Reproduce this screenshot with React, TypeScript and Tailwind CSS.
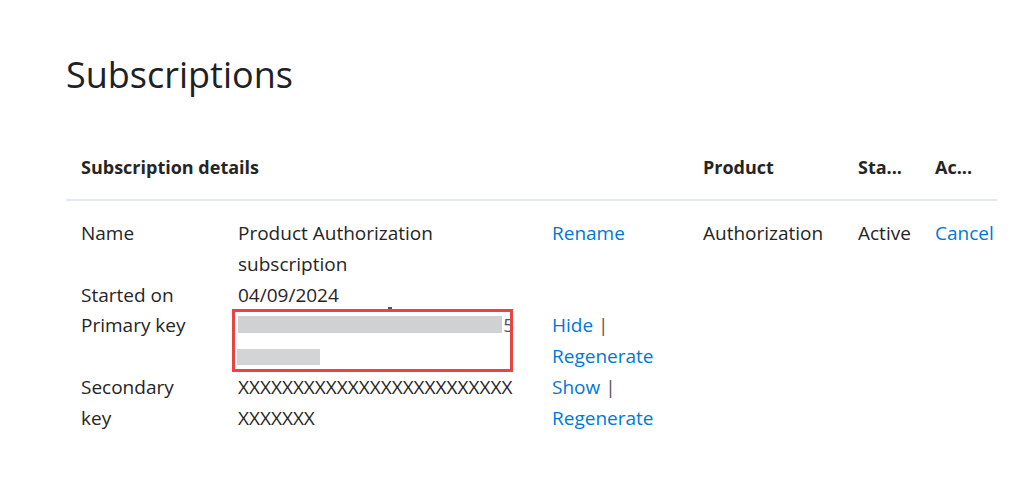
import React from "react";

const font = { fontFamily: '"Open Sans", "Noto Sans", sans-serif' };

function Link({ children }: { children: React.ReactNode }) {
  return <span className="text-[#0078d4]">{children}</span>;
}

export default function App() {
  return (
    <div className="min-h-[496px] w-[1031px] bg-white pl-[66px] pt-[51px] text-[#252525]" style={font}>
      <h1 className="text-[36px] leading-[48px] font-normal text-[#202124]">Subscriptions</h1>
      <div className="mt-[53px] w-[931px]">
        {/* header */}
        <div className="flex border-b-2 border-[#e3e9eb] pb-[17px] text-[18px] font-bold leading-[30px]">
          <div className="w-[622px] pl-[15px]">Subscription details</div>
          <div className="w-[155px] pl-[15px]">Product</div>
          <div className="w-[77px] pl-[15px]">Sta...</div>
          <div className="w-[77px] pl-[15px]">Ac...</div>
        </div>
        {/* body */}
        <div className="flex pt-[17px] text-[19px] leading-[30.75px]">
          <div className="w-[622px] pl-[15px]">
            <div className="grid grid-cols-[157px_314px_1fr]">
              <div>Name</div>
              <div className="pr-[30px]">Product Authorization subscription</div>
              <div>
                <Link>Rename</Link>
              </div>

              <div>Started on</div>
              <div>04/09/2024</div>
              <div></div>

              <div>Primary key</div>
              <div className="relative pr-[38px]">
                <div className="flex h-[30.75px] items-start pt-[6px]">
                  <div className="h-[17px] w-[266px] bg-[#d0d1d3]"></div>
                  <span className="-mt-[6px] ml-[1px] text-[#555]">5</span>
                </div>
                <div className="h-[30.75px] pt-[8px]">
                  <div className="ml-[-1px] h-[16px] w-[83px] bg-[#d3d4d5]"></div>
                </div>
                <div className="absolute left-[-6px] top-[-1px] h-[63px] w-[281px] border-[3px] border-[#e94444]"></div>
                <div className="absolute left-[150px] top-[-3px] h-[2px] w-[4px] bg-[#555]"></div>
              </div>
              <div>
                <Link>Hide</Link> <span className="text-[#555]">|</span>
                <br />
                <Link>Regenerate</Link>
              </div>

              <div>
                Secondary
                <br />
                key
              </div>
              <div className="pr-[36px]">
                <span className="break-all">XXXXXXXXXXXXXXXXXXXXXXXXXXXXXXXX</span>
              </div>
              <div>
                <Link>Show</Link> <span className="text-[#555]">|</span>
                <br />
                <Link>Regenerate</Link>
              </div>
            </div>
          </div>
          <div className="w-[155px] pl-[15px]">Authorization</div>
          <div className="w-[77px] pl-[15px]">Active</div>
          <div className="w-[77px] pl-[15px]">
            <Link>Cancel</Link>
          </div>
        </div>
      </div>
    </div>
  );
}
